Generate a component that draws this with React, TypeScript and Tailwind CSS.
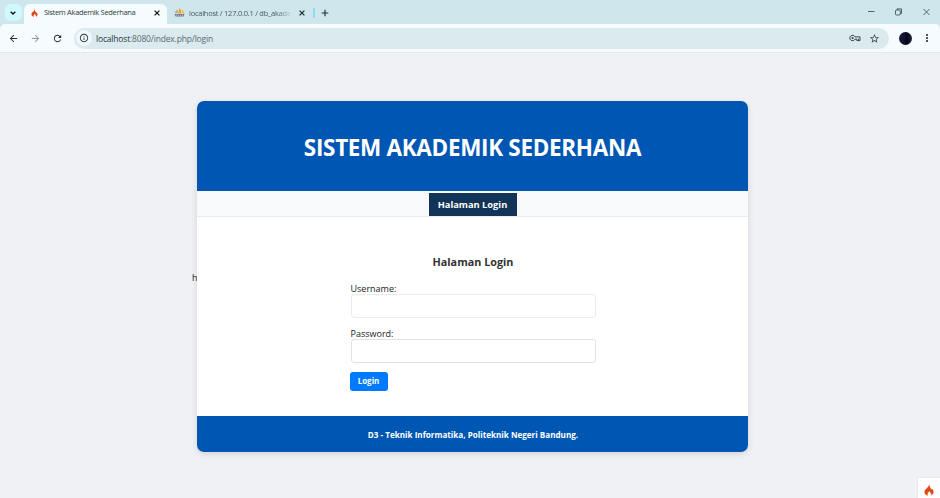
import React from "react";
import {
  MdArrowBack,
  MdArrowForward,
  MdRefresh,
  MdInfoOutline,
  MdStarBorder,
  MdMoreVert,
} from "react-icons/md";

function PhpMyAdminLogo() {
  return (
    <svg className="h-[9px] w-[11px] shrink-0" viewBox="0 0 22 18">
      <path d="M7 2 L8 10 H1 Z" fill="#b9a98f" />
      <path d="M10 0 Q15 4 15 11 H8 Q11 6 10 0Z" fill="#f89c0e" />
      <path d="M15 2 Q20 6 21 11 H16 Z" fill="#f9b54a" />
      <path d="M1 12 H21 L19 17 H3 Z" fill="#7b7894" />
      <path d="M4 14.5 H18" stroke="#e4e4ee" strokeWidth="1.4" strokeDasharray="2 2" />
    </svg>
  );
}

function FlameLogo({ className }: { className: string }) {
  return (
    <svg className={`shrink-0 ${className}`} viewBox="0 0 20 24" fill="#dd4814">
      <path d="M10 0.5 C11.5 3 11 5 13 8 C14 9.6 14.6 10.4 15 11.8 C15.6 11 15.8 10 15.6 8.8 C18 11 19.3 13.4 19.3 16.2 C19.3 19.8 17 22.4 13.4 23.3 C15 21.8 15.5 20.3 14.8 18.6 C14.3 19.2 13.8 19.5 13.1 19.6 C13.4 17.2 12 15.8 10.6 13.9 C10.2 16.2 7 17.2 7 20 C7 21.4 7.6 22.4 8.6 23.3 C4 22.8 0.8 19.8 0.8 16 C0.8 12.5 3.2 10.6 5.6 8.4 C8.2 6 10.1 4 10 0.5 Z" />
    </svg>
  );
}

function CloseIcon({ className }: { className: string }) {
  return (
    <svg className={`size-[8px] shrink-0 ${className}`} viewBox="0 0 8 8" fill="none" stroke="currentColor" strokeWidth="1.2">
      <path d="M1.6 1.6 L6.4 6.4 M6.4 1.6 L1.6 6.4" />
    </svg>
  );
}

function KeyIcon() {
  return (
    <svg className="ml-auto h-[8px] w-[12px]" viewBox="0 0 12 8" fill="none" stroke="#3c484c" strokeWidth="1">
      <path d="M6 2.9 A2.7 2.7 0 1 0 6 5.1 H7.8 V6.6 H11 V2.9 Z" strokeLinejoin="round" />
      <circle cx="3.6" cy="4" r="1.1" fill="#3c484c" stroke="none" />
      <path d="M9.4 4.6 V6.4" />
    </svg>
  );
}

function TabStrip() {
  return (
    <div className="flex h-6 bg-[#cfe7ec] text-[#2b3b40]">
      <div className="flex w-[24px] shrink-0 justify-center pt-1">
        <div className="ml-[2px] flex h-[17px] w-[17px] items-center justify-center rounded-[6px] bg-[#d0f8ff]">
          <svg className="size-[8px]" viewBox="0 0 8 8" fill="none" stroke="#111" strokeWidth="1.4">
            <path d="M1.7 2.8 L4 5.1 L6.3 2.8" />
          </svg>
        </div>
      </div>
      <div className="mt-1 flex h-5 w-[143px] shrink-0 items-center rounded-t-[6px] bg-[#f6fbfd] pb-[3px]">
        <FlameLogo className="ml-[7px] h-[8px] w-[7px]" />
        <span className="ml-[6px] w-[108px] whitespace-nowrap text-[7.5px] leading-none tracking-[-0.32px]">
          Sistem Akademik Sederhana
        </span>
        <CloseIcon className="ml-px text-[#111]" />
      </div>
      <div className="mt-1 flex h-[17px] items-center">
        <span className="ml-[7px] flex">
          <PhpMyAdminLogo />
        </span>
        <span className="ml-1 w-[103px] whitespace-nowrap bg-gradient-to-r from-[#3f5257] from-85% to-[#cfe7ec] bg-clip-text text-[7.5px] leading-[10px] tracking-[-0.25px] text-transparent">
          localhost / 127.0.0.1 / db_akade
        </span>
        <CloseIcon className="ml-[6px] text-[#1c2b30]" />
        <div className="ml-[7px] h-[10px] w-[1.5px] bg-[#8fdcee]" />
        <svg className="ml-[6px] size-[8px]" viewBox="0 0 8 8" stroke="#1c2b30" strokeWidth="1.1">
          <path d="M4 0.7 V7.3 M0.7 4 H7.3" />
        </svg>
      </div>
      <div className="ml-auto flex items-center">
        <svg className="mr-1 h-[12px] w-[68px]" viewBox="0 0 68 12" fill="none" stroke="#46565b" strokeWidth="0.9">
          <path d="M0 5.5 H6.5" />
          <rect x="27.5" y="4" width="4.8" height="5" rx="1" />
          <path d="M29 4 V2.9 H33.5 V7.5 H32.3" />
          <path d="M55.5 3 L61.5 9 M61.5 3 L55.5 9" />
        </svg>
      </div>
    </div>
  );
}

function Toolbar() {
  return (
    <div className="flex h-[29px] items-center rounded-t-[5px] border-b border-[#e2e9ec] bg-[#f6fbfd] text-[#263238]">
      <MdArrowBack className="ml-[8px] size-[11px] shrink-0" />
      <MdArrowForward className="ml-[11px] size-[11px] shrink-0 text-[#8f999c]" />
      <MdRefresh className="ml-[11px] size-[11px] shrink-0" />
      <div className="ml-[11px] flex h-[21px] w-[815px] shrink-0 items-center rounded-full bg-[#daeaef]">
        <div className="ml-[2px] flex size-4 items-center justify-center rounded-full bg-[#eff8fa]">
          <MdInfoOutline className="size-[10px]" />
        </div>
        <span className="ml-1 mt-[2px] whitespace-nowrap text-[8.5px] leading-none tracking-[-0.18px] text-[#5d6a6e]">
          <span className="text-[#2a373b]">localhost</span>:8080/index.php/login
        </span>
        <KeyIcon />
        <MdStarBorder className="ml-[8px] mr-[9px] size-[11px] text-[#3c484c]" />
      </div>
      <div className="ml-[10px] size-[13px] shrink-0 rounded-full bg-[linear-gradient(90deg,#161b2c,#0a1033_45%,#02040d_60%,#1c2440)]" />
      <MdMoreVert className="ml-[9px] size-[12px] shrink-0" />
    </div>
  );
}

function Field({ label, type, className }: { label: string; type: string; className: string }) {
  return (
    <label className="flex flex-col">
      <span className="h-[12px] text-[9px] leading-[13px] text-[#222]">{label}</span>
      <input
        type={type}
        className={`h-[24px] w-full rounded-[3px] border bg-white outline-none ${className}`}
      />
    </label>
  );
}

function LoginCard() {
  return (
    <section className="flex h-[351px] w-[551px] shrink-0 flex-col overflow-hidden rounded-[7px] bg-white shadow-[0_2px_6px_rgba(0,0,0,0.12)]">
      <header className="flex h-[90px] shrink-0 items-center justify-center bg-[#0056b3] pt-[4px]">
        <h1 className="whitespace-nowrap text-[22.5px] font-bold leading-none tracking-[-0.32px] text-white">
          SISTEM AKADEMIK SEDERHANA
        </h1>
      </header>
      <nav className="flex h-[26px] shrink-0 items-center justify-center border-b border-[#e9ecef] bg-[#f8f9fb] pt-px">
        <a className="flex h-[23px] w-[88px] items-center justify-center whitespace-nowrap bg-[#113458] pt-px text-[9.3px] font-bold leading-none text-white">
          Halaman Login
        </a>
      </nav>
      <main className="flex flex-1 flex-col items-center pt-[38px]">
        <h2 className="ml-px h-[14px] whitespace-nowrap text-[10.8px] font-bold leading-[14px] text-[#333]">Halaman Login</h2>
        <form className="ml-px mt-[13px] flex w-[245px] flex-col">
          <Field label="Username:" type="text" className="border-[#e9eced]" />
          <div className="h-[9px]" />
          <Field label="Password:" type="password" className="border-[#dfe2e3]" />
          <button
            type="button"
            className="-ml-px mt-[9px] flex h-[19px] w-[38px] items-center justify-center rounded-[3px] bg-[#007bff] pb-[2px] text-[8px] font-bold leading-none text-white"
          >
            Login
          </button>
        </form>
      </main>
      <footer className="flex h-[36px] shrink-0 items-center justify-center bg-[#0056b3] pt-[2px]">
        <p className="ml-px whitespace-nowrap text-[8.1px] font-bold leading-none text-white">
          D3 - Teknik Informatika, Politeknik Negeri Bandung.
        </p>
      </footer>
    </section>
  );
}

export default function App() {
  return (
    <div className="flex h-[498px] w-[940px] flex-col overflow-hidden bg-[#cfe7ec] font-['Open_Sans','Noto_Sans',sans-serif]">
      <TabStrip />
      <Toolbar />
      <div className="relative flex flex-1 items-start justify-center bg-[#f0f1f5] pt-12">
        <span className="mt-[170px] w-[5px] text-[9px] leading-[14px] text-[#222]">h</span>
        <LoginCard />
        <div className="absolute bottom-0 right-0 flex h-[20px] w-[22px] items-center justify-center bg-white pt-[3px] shadow-[0_0_2px_rgba(0,0,0,0.1)]">
          <FlameLogo className="h-[12px] w-[10px]" />
        </div>
      </div>
    </div>
  );
}
